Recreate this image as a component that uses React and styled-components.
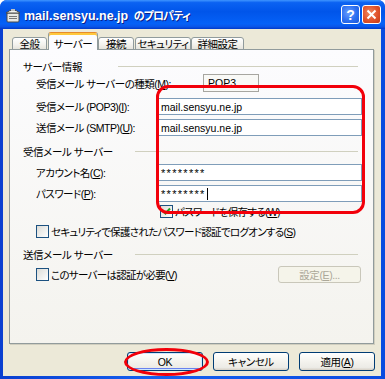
import React from "react";
import styled, { createGlobalStyle } from "styled-components";

const UI = `"Liberation Sans", "Noto Sans CJK JP", sans-serif`;

const Global = createGlobalStyle`
  html, body { margin: 0; padding: 0; background: #ffffff; }
  body { font-family: ${UI}; }
`;

const Window = styled.div`
  position: relative;
  width: 385px;
  height: 379px;
  display: flex;
  flex-direction: column;
  border-radius: 7px 7px 0 0;
  overflow: hidden;
  background: #0842d8;
  font-family: ${UI};
  font-feature-settings: "palt";
  color: #000;
`;

const TitleBar = styled.div`
  height: 29px;
  flex: none;
  display: flex;
  align-items: center;
  padding: 0 4px 0 5px;
  background: linear-gradient(
    to bottom,
    #3f95ff 0%,
    #0b62f2 9%,
    #0055ea 40%,
    #0561f7 82%,
    #0a55e8 92%,
    #0039c9 100%
  );
`;

const TitleText = styled.div`
  margin-left: 3px;
  flex: 1;
  color: #fff;
  font-weight: bold;
  font-size: 12.5px;
  text-shadow: 1px 1px 0 #0a1e8a;
  white-space: nowrap;
`;

const TitleJp = styled.span`
  font-size: 11px;
  letter-spacing: -0.9px;
  margin-left: 2px;
`;

const CaptionButton = styled.div`
  width: 19px;
  height: 19px;
  box-sizing: border-box;
  margin-left: ${(p) => (p.first ? 0 : 2)}px;
  border: 1px solid #fff;
  border-radius: 3px;
  display: flex;
  align-items: center;
  justify-content: center;
  color: #fff;
  font-weight: bold;
  font-size: 14px;
  background: ${(p) =>
    p.danger
      ? "radial-gradient(circle at 40% 40%, #f08a62 0%, #e0522b 55%, #c43a14 100%)"
      : "radial-gradient(circle at 40% 40%, #6aa0ff 0%, #2c6ff0 55%, #1a55d8 100%)"};
`;

const Frame = styled.div`
  flex: 1;
  display: flex;
  padding: 0 4px 3px 3px;
  background: linear-gradient(to right, #0a3fd0, #1560f0 40%, #0a4ae0);
`;

const Body = styled.div`
  flex: 1;
  display: flex;
  flex-direction: column;
  background: #ece9d8;
  padding: 0 7px 5px 6px;
`;

const TabRow = styled.div`
  display: flex;
  align-items: flex-end;
  height: 18px;
  margin: 3px 0 -1px 3px;
  position: relative;
  z-index: 1;
`;

const Tab = styled.div`
  box-sizing: border-box;
  width: ${(p) => p.w}px;
  margin-left: ${(p) => p.ml || 0}px;
  height: ${(p) => (p.active ? 18 : 13)}px;
  border: 1px solid #919b9c;
  border-bottom: ${(p) => (p.active ? "none" : "1px solid #919b9c")};
  border-top: ${(p) => (p.active ? "1px solid #e68b2c" : "1px solid #919b9c")};
  border-radius: 3px 3px 0 0;
  background: ${(p) =>
    p.active ? "#fcfcfe" : "linear-gradient(#ffffff, #f3f2ed 60%, #e6e4dc)"};
  box-shadow: ${(p) => (p.active ? "inset 0 2px 0 #ffc83c" : "none")};
  font-size: 10.5px;
  display: flex;
  align-items: ${(p) => (p.active ? "flex-start" : "center")};
  padding-top: ${(p) => (p.active ? 3 : 0)}px;
  justify-content: center;
  white-space: nowrap;
  letter-spacing: -0.5px;
`;

const Panel = styled.div`
  height: 295px;
  box-sizing: border-box;
  border: 1px solid #919b9c;
  background: linear-gradient(#fcfcfe, #f4f3ee);
  box-shadow: 1px 1px 0 #d0cebf;
  display: flex;
  flex-direction: column;
  padding: 0 11px 0 13px;
`;

const SectionRow = styled.div`
  display: flex;
  align-items: center;
  height: 12px;
  margin-top: ${(p) => p.mt}px;
`;

const SectionLabel = styled.div`
  width: ${(p) => p.w}px;
  font-size: 10.5px;
  white-space: nowrap;
  letter-spacing: -0.4px;
`;

const Rule = styled.div`
  flex: 1;
  height: 1px;
  margin-right: 4px;
  background: #d0d0bf;
`;

const Row = styled.div`
  display: flex;
  align-items: center;
  height: ${(p) => p.h}px;
  margin-top: ${(p) => p.mt}px;
  padding-left: ${(p) => (p.indent != null ? p.indent : 13)}px;
`;

const FieldLabel = styled.div`
  width: 122px;
  flex: none;
  font-size: 10.5px;
  white-space: nowrap;
  letter-spacing: -0.5px;
`;

const Key = styled.span`
  text-decoration: underline;
`;

const TextBox = styled.div`
  flex: 1;
  height: 100%;
  box-sizing: border-box;
  border: 1px solid #7f9db9;
  background: #fff;
  display: flex;
  align-items: center;
  padding-left: 2px;
  font-size: ${(p) => (p.secret ? 11 : 10.5)}px;
  letter-spacing: ${(p) => (p.secret ? "1.3px" : "0")};
  font-family: "Liberation Sans", sans-serif;
  white-space: nowrap;
`;

const Caret = styled.span`
  display: inline-block;
  width: 1px;
  height: 12px;
  background: #000;
  margin-left: 1px;
`;

const StaticBox = styled.div`
  margin-left: 45px;
  width: 56px;
  height: 100%;
  box-sizing: border-box;
  border: 1px solid #a7a6a0;
  background: #f9f9f6;
  display: flex;
  align-items: center;
  padding-left: 4px;
  font-size: 10.5px;
`;

const Box = styled.div`
  width: 13px;
  height: 13px;
  flex: none;
  box-sizing: border-box;
  border: 1px solid #1c5180;
  background: linear-gradient(135deg, #dcdcd7, #ffffff);
  display: flex;
  align-items: center;
  justify-content: center;
`;

const CheckLabel = styled.div`
  margin-left: 2px;
  font-size: 10.5px;
  white-space: nowrap;
  letter-spacing: -0.7px;
`;

const Spacer = styled.div`
  flex: 1;
`;

const PushButton = styled.div`
  box-sizing: border-box;
  width: ${(p) => p.w}px;
  height: ${(p) => p.h}px;
  margin-left: ${(p) => p.ml || 0}px;
  margin-right: ${(p) => p.mr || 0}px;
  border: 1px solid ${(p) => (p.disabled ? "#c9c7ba" : "#003c74")};
  border-radius: 3px;
  background: ${(p) =>
    p.disabled
      ? "#f5f4ea"
      : "linear-gradient(#ffffff, #f4f3ee 50%, #ecebe6 85%, #d6d0c5)"};
  box-shadow: ${(p) =>
    p.isDefault ? "inset 0 0 0 1px #cee7ff, inset 0 -1px 0 1px #6982ee" : "none"};
  color: ${(p) => (p.disabled ? "#aca899" : "#000")};
  font-size: 10.5px;
  display: flex;
  align-items: center;
  justify-content: center;
  white-space: nowrap;
  letter-spacing: -0.4px;
`;

const ButtonRow = styled.div`
  display: flex;
  justify-content: flex-end;
  margin: 8px -1px 0 0;
`;

const Highlight = styled.div`
  position: absolute;
  left: 156px;
  top: 85px;
  width: 209px;
  height: 129px;
  box-sizing: border-box;
  border: 3.5px solid #f2000a;
  border-radius: 12px;
  pointer-events: none;
`;

const Ring = styled.div`
  position: absolute;
  left: 124px;
  top: 348px;
  width: 85px;
  height: 28px;
  box-sizing: border-box;
  border: 3px solid #f2000a;
  border-radius: 50%;
  pointer-events: none;
`;

function Check({ checked }) {
  return (
    <Box>
      {checked && (
        <svg width="9" height="9" viewBox="0 0 9 9">
          <path d="M1 4 L3.5 6.5 L8 1.5" stroke="#21a121" strokeWidth="2" fill="none" />
        </svg>
      )}
    </Box>
  );
}

function AppIcon() {
  return (
    <svg width="16" height="16" viewBox="0 0 16 16">
      <rect x="2" y="6" width="12" height="9" rx="1" fill="#e8e8e4" stroke="#4a4a4a" />
      <rect x="4" y="9" width="8" height="1" fill="#777" />
      <rect x="4" y="11" width="8" height="1" fill="#777" />
      <path d="M1 6 Q8 0 15 6 Z" fill="#f4f4f0" stroke="#4a4a4a" />
      <rect x="6" y="2" width="4" height="2" fill="#bfbfbf" />
    </svg>
  );
}

export default function App() {
  return (
    <>
      <Global />
      <Window>
        <TitleBar>
          <AppIcon />
          <TitleText>
            mail.sensyu.ne.jp <TitleJp>のプロパティ</TitleJp>
          </TitleText>
          <CaptionButton first>?</CaptionButton>
          <CaptionButton danger>
            <svg width="11" height="11" viewBox="0 0 11 11">
              <path d="M1.5 1.5 L9.5 9.5 M9.5 1.5 L1.5 9.5" stroke="#fff" strokeWidth="2" />
            </svg>
          </CaptionButton>
        </TitleBar>
        <Frame>
          <Body>
            <TabRow>
              <Tab w={35}>全般</Tab>
              <Tab w={50} ml={1} active>サーバー</Tab>
              <Tab w={36}>接続</Tab>
              <Tab w={56} ml={1}>セキュリティ</Tab>
              <Tab w={53}>詳細設定</Tab>
            </TabRow>
            <Panel>
              <SectionRow mt={10}>
                <SectionLabel w={95}>サーバー情報</SectionLabel>
                <Rule />
              </SectionRow>
              <Row h={18} mt={2}>
                <FieldLabel>
                  受信メール サーバーの種類(<Key>M</Key>):
                </FieldLabel>
                <StaticBox>POP3</StaticBox>
              </Row>
              <Row h={17} mt={6}>
                <FieldLabel>
                  受信メール (POP3)(<Key>I</Key>):
                </FieldLabel>
                <TextBox>mail.sensyu.ne.jp</TextBox>
              </Row>
              <Row h={17} mt={4}>
                <FieldLabel>
                  送信メール (SMTP)(<Key>U</Key>):
                </FieldLabel>
                <TextBox>mail.sensyu.ne.jp</TextBox>
              </Row>
              <SectionRow mt={9}>
                <SectionLabel w={112}>受信メール サーバー</SectionLabel>
                <Rule />
              </SectionRow>
              <Row h={17} mt={7}>
                <FieldLabel>
                  アカウント名(<Key>C</Key>):
                </FieldLabel>
                <TextBox secret>********</TextBox>
              </Row>
              <Row h={17} mt={4}>
                <FieldLabel>
                  パスワード(<Key>P</Key>):
                </FieldLabel>
                <TextBox secret>
                  ********
                  <Caret />
                </TextBox>
              </Row>
              <Row h={14} mt={2} indent={137}>
                <Check checked />
                <CheckLabel>
                  パスワードを保存する(<Key>W</Key>)
                </CheckLabel>
              </Row>
              <Row h={14} mt={6}>
                <Check />
                <CheckLabel>
                  セキュリティで保護されたパスワード認証でログオンする(<Key>S</Key>)
                </CheckLabel>
              </Row>
              <SectionRow mt={10}>
                <SectionLabel w={112}>送信メール サーバー</SectionLabel>
                <Rule />
              </SectionRow>
              <Row h={17} mt={6}>
                <Check />
                <CheckLabel>
                  このサーバーは認証が必要(<Key>V</Key>)
                </CheckLabel>
                <Spacer />
                <PushButton w={83} h={17} mr={1} disabled>
                  設定(<Key>E</Key>)...
                </PushButton>
              </Row>
            </Panel>
            <ButtonRow>
              <PushButton w={76} h={19} isDefault>
                OK
              </PushButton>
              <PushButton w={76} h={19} ml={10}>
                キャンセル
              </PushButton>
              <PushButton w={76} h={19} ml={10}>
                適用(<Key>A</Key>)
              </PushButton>
            </ButtonRow>
          </Body>
        </Frame>
        <Highlight />
        <Ring />
      </Window>
    </>
  );
}
